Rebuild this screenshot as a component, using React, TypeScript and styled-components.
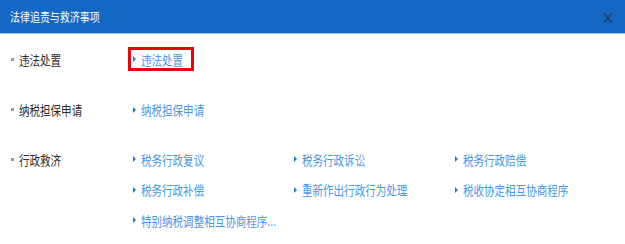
import React from "react";
import styled, { createGlobalStyle } from "styled-components";

const Global = createGlobalStyle`
  html, body { margin: 0; padding: 0; background: #fff; }
  body { font-family: "Microsoft YaHei", "Noto Sans CJK SC", sans-serif; }
`;

const Dialog = styled.div`
  width: 625px;
  height: 244px;
  background: #fff;
  display: flex;
  flex-direction: column;
`;

const Header = styled.div`
  height: 33px;
  background: #1467c2;
  border-bottom: 1px solid #9cc3ea;
  display: flex;
  align-items: center;
  justify-content: space-between;
  padding: 0 12px 0 10px;
  color: #fff;
  font-size: 12px;
`;

const Squeeze = styled.span<{ $s?: number }>`
  display: inline-block;
  white-space: nowrap;
  transform: scaleX(${(p) => p.$s ?? 0.81});
  transform-origin: left center;
`;

const Close = styled.span`
  color: #2a3b55;
  font-family: "Liberation Sans", sans-serif;
  font-size: 15px;
  line-height: 1;
  margin-top: 2px;
`;

const Body = styled.div`
  display: flex;
  flex-direction: column;
  padding-top: 10px;
`;

const Row = styled.div<{ $mb: number }>`
  display: flex;
  margin-bottom: ${(p) => p.$mb}px;
`;

const Label = styled.div`
  width: 133px;
  flex: none;
  display: flex;
  align-items: center;
  height: 30px;
  padding-left: 11px;
  box-sizing: border-box;
  font-size: 13px;
  color: #2b2b2b;
  &::before {
    content: "";
    width: 3px;
    height: 3px;
    background: #999;
    margin-right: 5px;
  }
`;

const Links = styled.div`
  display: grid;
  grid-template-columns: 161px 161px 161px;
  grid-auto-rows: 30.5px;
`;

const Link = styled.a`
  display: flex;
  align-items: center;
  font-size: 13px;
  color: #4896e4;
  text-decoration: none;
  white-space: nowrap;
  &::before {
    content: "";
    flex: none;
    width: 0;
    height: 0;
    border-top: 3px solid transparent;
    border-bottom: 3px solid transparent;
    border-left: 3px solid #1a7fd4;
    margin-right: 5px;
  }
`;

const Active = styled.div`
  display: flex;
  align-items: center;
  align-self: center;
  border: 3px solid #e8000b;
  height: 24px;
  width: 66px;
  padding-left: 2px;
  margin-left: -5px;
  box-sizing: border-box;
`;

const items = [
  "税务行政复议",
  "税务行政诉讼",
  "税务行政赔偿",
  "税务行政补偿",
  "重新作出行政行为处理",
  "税收协定相互协商程序",
  "特别纳税调整相互协商程序...",
];

export default function App() {
  return (
    <>
      <Global />
      <Dialog>
        <Header>
          <Squeeze $s={0.83}>法律追责与救济事项</Squeeze>
          <Close>X</Close>
        </Header>
        <Body>
          <Row $mb={20}>
            <Label>
              <Squeeze>违法处置</Squeeze>
            </Label>
            <Links>
              <Active>
                <Link href="#">
                  <Squeeze>违法处置</Squeeze>
                </Link>
              </Active>
            </Links>
          </Row>
          <Row $mb={19}>
            <Label>
              <Squeeze>纳税担保申请</Squeeze>
            </Label>
            <Links>
              <Link href="#">
                <Squeeze>纳税担保申请</Squeeze>
              </Link>
            </Links>
          </Row>
          <Row $mb={0}>
            <Label>
              <Squeeze>行政救济</Squeeze>
            </Label>
            <Links>
              {items.map((t) => (
                <Link href="#" key={t}>
                  <Squeeze>{t}</Squeeze>
                </Link>
              ))}
            </Links>
          </Row>
        </Body>
      </Dialog>
    </>
  );
}
